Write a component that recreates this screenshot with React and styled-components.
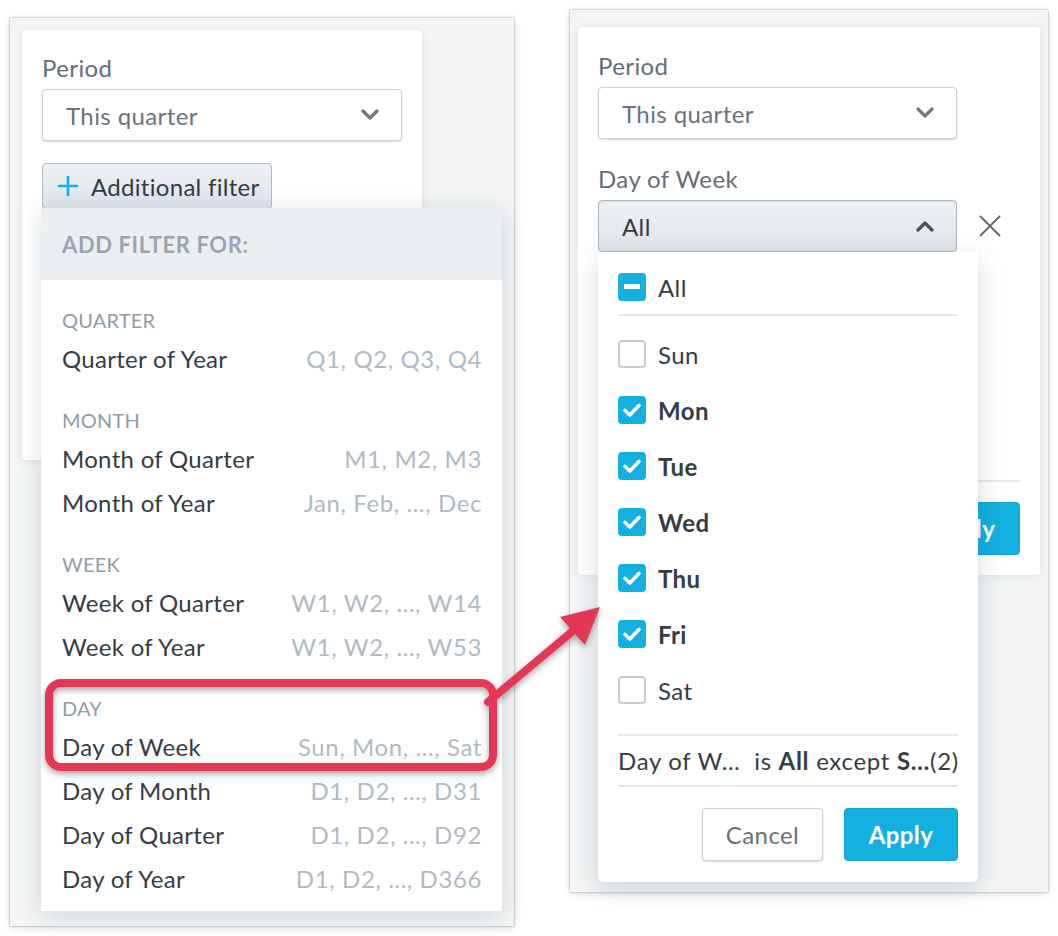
import React from "react";
import styled, { createGlobalStyle } from "styled-components";

const GlobalStyle = createGlobalStyle`
  body {
    margin: 0;
    background: #ffffff;
    font-family: Lato, "Open Sans", sans-serif;
    color: #343c45;
    letter-spacing: 0.4px;
  }
`;

const Page = styled.div`
  position: relative;
  width: 1058px;
  height: 936px;
  box-sizing: border-box;
  padding-left: 10px;
  display: flex;
  align-items: flex-start;
  gap: 56px;
`;

const Frame = styled.div`
  position: relative;
  box-sizing: border-box;
  width: ${({ $w }) => $w}px;
  height: ${({ $h }) => $h}px;
  margin-top: ${({ $top }) => $top}px;
  padding: ${({ $pad }) => $pad};
  background: #f3f5f6;
  box-shadow: 0 0 2px rgba(0, 0, 0, 0.4), 0 2px 8px rgba(0, 0, 0, 0.12);
`;

const Card = styled.div`
  position: relative;
  box-sizing: border-box;
  width: ${({ $w }) => $w}px;
  height: ${({ $h }) => $h}px;
  padding: ${({ $pad }) => $pad};
  display: flex;
  flex-direction: column;
  background: #ffffff;
  border-radius: 4px;
  box-shadow: 0 1px 10px rgba(40, 60, 80, 0.1);
`;

const FieldLabel = styled.div`
  font-size: 24px;
  line-height: 26px;
  color: #646d77;
  margin-top: ${({ $mt }) => $mt || 0}px;
`;

const Select = styled.div`
  position: relative;
  box-sizing: border-box;
  width: ${({ $w }) => $w}px;
  height: 52px;
  margin-top: 8px;
  padding: 0 22px 0 23px;
  display: flex;
  align-items: center;
  justify-content: space-between;
  font-size: 24px;
  border-radius: 4px;
  color: ${({ $open }) => ($open ? "#343c45" : "#6a737d")};
  border: 1px solid ${({ $open }) => ($open ? "#aab6c2" : "#c8d1d9")};
  background: ${({ $open }) =>
    $open ? "linear-gradient(#eef1f4, #dfe5ea)" : "#ffffff"};
  box-shadow: ${({ $open }) =>
    $open
      ? "inset 0 1px 2px rgba(0,0,0,0.06)"
      : "0 1px 2px rgba(20,40,60,0.18)"};
`;

const AddButton = styled.div`
  position: relative;
  align-self: flex-start;
  box-sizing: border-box;
  height: 46px;
  margin-top: 22px;
  padding: 0 11px 0 14px;
  display: flex;
  align-items: center;
  gap: 12px;
  font-size: 24px;
  letter-spacing: 0.3px;
  color: #333c46;
  border: 1px solid #aeb9c4;
  border-radius: 4px;
  background: linear-gradient(#eef1f4, #dee4ea);
`;

const FilterMenu = styled.div`
  position: absolute;
  top: 100%;
  left: -2px;
  width: 461px;
  height: 703px;
  display: flex;
  flex-direction: column;
  background: #ffffff;
  box-shadow: 0 4px 22px rgba(30, 50, 70, 0.16);
  z-index: 2;
`;

const MenuHeader = styled.div`
  height: 72px;
  flex-shrink: 0;
  padding-left: 21px;
  display: flex;
  align-items: center;
  background: #eceff1;
  font-size: 22px;
  font-weight: 700;
  letter-spacing: 0.6px;
  color: #9aa5af;
`;

const Group = styled.div`
  padding: 24px 20px 0 21px;
`;

const GroupLabel = styled.div`
  height: 32px;
  display: flex;
  align-items: center;
  font-size: 20px;
  letter-spacing: 0.2px;
  color: #8f9ba6;
`;

const Item = styled.div`
  height: 44px;
  display: flex;
  align-items: center;
  justify-content: space-between;
  font-size: 24px;
  color: #343c45;

  span {
    color: #afbac5;
    letter-spacing: 0.6px;
  }
`;

const SelectRow = styled.div`
  position: relative;
  display: flex;
  align-items: center;
  gap: 21px;
  margin-top: 8px;

  ${Select} {
    margin-top: 0;
  }
`;

const Anchor = styled.div`
  position: relative;
`;

const CardFooter = styled.div`
  margin-top: auto;
  padding-top: 20px;
  border-top: 2px solid #e3e8ec;
  display: flex;
  justify-content: flex-end;
  gap: 21px;
`;

const ListMenu = styled.div`
  position: absolute;
  top: 100%;
  left: 0;
  width: 380px;
  height: 630px;
  box-sizing: border-box;
  padding: 8px 20px 0;
  background: #ffffff;
  border-radius: 0 0 6px 6px;
  box-shadow: 0 6px 26px rgba(30, 50, 70, 0.18);
  z-index: 2;
`;

const CheckRow = styled.div`
  box-sizing: border-box;
  height: 56px;
  display: flex;
  align-items: center;
  gap: 12px;
  font-size: 24px;
  font-weight: ${({ $bold }) => ($bold ? 700 : 400)};
  color: #343c45;
`;

const AllRow = styled(CheckRow)`
  border-bottom: 2px solid #e3e8ec;
  margin-bottom: 10px;
`;

const Box = styled.div`
  box-sizing: border-box;
  width: 28px;
  height: 28px;
  flex-shrink: 0;
  border-radius: 4px;
  display: flex;
  align-items: center;
  justify-content: center;
  background: ${({ $on }) => ($on ? "#14b0e0" : "#ffffff")};
  border: ${({ $on }) => ($on ? "none" : "2px solid #c3ccd4")};
`;

const Summary = styled.div`
  box-sizing: border-box;
  margin-top: 16px;
  height: 53px;
  display: flex;
  align-items: center;
  font-size: 24px;
  letter-spacing: 0.7px;
  color: #343c45;
  white-space: pre;
  border-top: 2px solid #e3e8ec;
  border-bottom: 2px solid #e3e8ec;

  b {
    font-weight: 700;
  }
`;

const Actions = styled.div`
  padding-top: 21px;
  display: flex;
  justify-content: flex-end;
  gap: 21px;
`;

const Button = styled.div`
  box-sizing: border-box;
  height: 53px;
  width: ${({ $w }) => $w}px;
  display: flex;
  align-items: center;
  justify-content: center;
  font-size: 24px;
  border-radius: 4px;
  font-weight: ${({ $primary }) => ($primary ? 700 : 400)};
  color: ${({ $primary }) => ($primary ? "#ffffff" : "#6a737d")};
  background: ${({ $primary }) => ($primary ? "#14b0e0" : "#ffffff")};
  border: 1px solid ${({ $primary }) => ($primary ? "#0f9fcc" : "#c8d1d9")};
  box-shadow: ${({ $primary }) =>
    $primary ? "none" : "0 1px 2px rgba(20,40,60,0.18)"};
`;

const Annotation = styled.svg`
  position: absolute;
  top: 0;
  left: 0;
  pointer-events: none;
  z-index: 10;
`;

const Chevron = ({ up }) => (
  <svg width="18" height="12" viewBox="0 0 18 12">
    <path
      d={up ? "M2 10 L9 3 L16 10" : "M2 2 L9 9 L16 2"}
      fill="none"
      stroke={up ? "#48525c" : "#6f7882"}
      strokeWidth="3.2"
      strokeLinecap="round"
      strokeLinejoin="round"
    />
  </svg>
);

const Plus = () => (
  <svg width="22" height="22" viewBox="0 0 22 22">
    <path d="M11 1 V21 M1 11 H21" stroke="#14b0e0" strokeWidth="2.6" />
  </svg>
);

const Close = () => (
  <svg width="24" height="24" viewBox="0 0 24 24">
    <path d="M2 2 L22 22 M22 2 L2 22" stroke="#5d6670" strokeWidth="1.8" />
  </svg>
);

const Check = () => (
  <svg width="20" height="16" viewBox="0 0 20 16">
    <path
      d="M3 8.5 L7.8 13 L17 3.5"
      fill="none"
      stroke="#ffffff"
      strokeWidth="3.6"
      strokeLinecap="round"
      strokeLinejoin="round"
    />
  </svg>
);

const Minus = () => (
  <svg width="16" height="6" viewBox="0 0 16 6">
    <rect x="0" y="0" width="16" height="5" rx="1" fill="#ffffff" />
  </svg>
);

const groups = [
  { label: "Quarter", items: [["Quarter of Year", "Q1, Q2, Q3, Q4"]] },
  {
    label: "Month",
    items: [
      ["Month of Quarter", "M1, M2, M3"],
      ["Month of Year", "Jan, Feb, …, Dec"],
    ],
  },
  {
    label: "Week",
    items: [
      ["Week of Quarter", "W1, W2, …, W14"],
      ["Week of Year", "W1, W2, …, W53"],
    ],
  },
  {
    label: "Day",
    items: [
      ["Day of Week", "Sun, Mon, …, Sat"],
      ["Day of Month", "D1, D2, …, D31"],
      ["Day of Quarter", "D1, D2, …, D92"],
      ["Day of Year", "D1, D2, …, D366"],
    ],
  },
];

const days = [
  ["Sun", false],
  ["Mon", true],
  ["Tue", true],
  ["Wed", true],
  ["Thu", true],
  ["Fri", true],
  ["Sat", false],
];

const App = () => {
  return (
    <>
      <GlobalStyle />
      <Page>
        <Frame $w={504} $h={908} $top={18} $pad="12px 0 0 12px">
          <Card $w={400} $h={430} $pad="25px 20px 0 20px">
            <FieldLabel>Period</FieldLabel>
            <Select $w={360}>
              This quarter
              <Chevron />
            </Select>
            <AddButton>
              <Plus />
              Additional filter
              <FilterMenu>
                <MenuHeader>ADD FILTER FOR:</MenuHeader>
                {groups.map((group) => (
                  <Group key={group.label}>
                    <GroupLabel>{group.label.toUpperCase()}</GroupLabel>
                    {group.items.map(([name, values]) => (
                      <Item key={name}>
                        {name}
                        <span>{values}</span>
                      </Item>
                    ))}
                  </Group>
                ))}
              </FilterMenu>
            </AddButton>
          </Card>
        </Frame>

        <Frame $w={478} $h={882} $top={10} $pad="17px 8px 0 8px">
          <Card $w={462} $h={548} $pad="26px 20px 20px 20px">
            <FieldLabel>Period</FieldLabel>
            <Select $w={359}>
              This quarter
              <Chevron />
            </Select>
            <FieldLabel $mt={27}>Day of Week</FieldLabel>
            <SelectRow>
              <Anchor>
                <Select $w={359} $open>
                  All
                  <Chevron up />
                </Select>
                <ListMenu>
                  <AllRow>
                    <Box $on>
                      <Minus />
                    </Box>
                    All
                  </AllRow>
                  {days.map(([day, on]) => (
                    <CheckRow key={day} $bold={on}>
                      <Box $on={on}>{on && <Check />}</Box>
                      {day}
                    </CheckRow>
                  ))}
                  <Summary>
                    Day of W…  is <b>All</b> except <b>S…</b>(2)
                  </Summary>
                  <Actions>
                    <Button $w={121}>Cancel</Button>
                    <Button $w={114} $primary>
                      Apply
                    </Button>
                  </Actions>
                </ListMenu>
              </Anchor>
              <Close />
            </SelectRow>
            <CardFooter>
              <Button $w={121}>Cancel</Button>
              <Button $w={114} $primary>
                Apply
              </Button>
            </CardFooter>
          </Card>
        </Frame>

        <Annotation width="1058" height="936" viewBox="0 0 1058 936">
          <defs>
            <filter id="drop" x="-10%" y="-10%" width="120%" height="130%">
              <feDropShadow dx="0" dy="3" stdDeviation="3" floodColor="#000" floodOpacity="0.35" />
            </filter>
          </defs>
          <g filter="url(#drop)">
            <rect x="49" y="683" width="444" height="84" rx="12" fill="none" stroke="#e33955" strokeWidth="8" />
            <path d="M488 702 L574 630" stroke="#e33955" strokeWidth="8" strokeLinecap="round" />
            <polygon points="600,607 560,617 585,645" fill="#e33955" />
          </g>
        </Annotation>
      </Page>
    </>
  );
};

export default App;
